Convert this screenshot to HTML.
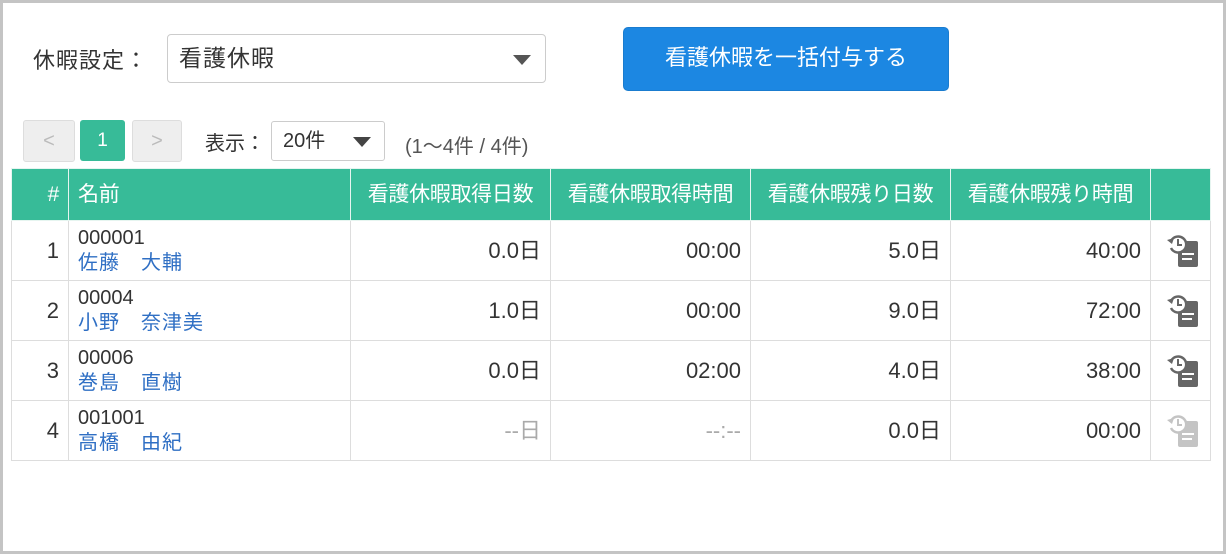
<html><head><style>
body{margin:0;width:1226px;height:554px;overflow:hidden;background:#fff;font-family:"Liberation Sans","Noto Sans CJK JP",sans-serif;color:#333}
.frame{position:absolute;left:0;top:0;width:1220px;height:548px;border:3px solid #c4c4c4}
.abs{position:absolute}
table{position:absolute;left:11px;top:168px;border-collapse:collapse;font-size:22px}
td,th{border:1px solid #ddd;padding:0 9px;vertical-align:middle;line-height:24px}
th{background:#37bb98;color:#fff;font-weight:normal;height:52px;border-color:#e6f5f0;text-align:center;font-size:21px;box-sizing:border-box;padding:0 6px;letter-spacing:-0.3px}
td{height:60px;box-sizing:border-box}
.r{text-align:right}
.n{font-size:20px;line-height:25px}
.n a{color:#2f6fc4;letter-spacing:1px}
.g{color:#aaa}
</style></head><body>
<div class="frame"></div>
<div class="abs" style="left:33px;top:43px;font-size:22px;letter-spacing:1px">休暇設定：</div>
<div class="abs" style="left:167px;top:34px;width:377px;height:47px;border:1px solid #ccc;border-radius:4px;font-size:23px;line-height:46px;text-indent:11px;letter-spacing:1px">看護休暇<span style="position:absolute;right:14px;top:20px;border-left:9px solid transparent;border-right:9px solid transparent;border-top:10px solid #555"></span></div>
<div class="abs" style="left:623px;top:27px;width:324px;height:62px;background:#1c87e2;border-radius:5px;border:1px solid #1a7ccf;color:#fff;font-size:22px;text-align:center;line-height:60px">看護休暇を一括付与する</div>
<div class="abs" style="left:23px;top:120px;width:50px;height:40px;background:#eee;border:1px solid #ddd;border-radius:3px;color:#bbb;text-align:center;line-height:40px;font-size:20px">&lt;</div>
<div class="abs" style="left:80px;top:120px;width:45px;height:41px;background:#37bb98;border-radius:3px;color:#fff;text-align:center;line-height:41px;font-size:19px">1</div>
<div class="abs" style="left:132px;top:120px;width:48px;height:40px;background:#eee;border:1px solid #ddd;border-radius:3px;color:#bbb;text-align:center;line-height:40px;font-size:20px">&gt;</div>
<div class="abs" style="left:205px;top:127px;font-size:20px">表示：</div>
<div class="abs" style="left:271px;top:121px;width:112px;height:38px;border:1px solid #ccc;border-radius:3px;font-size:20px;line-height:38px;text-indent:11px">20件<span style="position:absolute;right:13px;top:15px;border-left:9px solid transparent;border-right:9px solid transparent;border-top:10px solid #444"></span></div>
<div class="abs" style="left:405px;top:130px;font-size:20px;color:#555">(1〜4件 / 4件)</div>
<table>
<tr><th style="width:57px;text-align:right;padding-right:9px">#</th><th style="width:282px;text-align:left;padding-left:9px">名前</th><th style="width:200px">看護休暇取得日数</th><th style="width:200px">看護休暇取得時間</th><th style="width:200px">看護休暇残り日数</th><th style="width:200px">看護休暇残り時間</th><th style="width:60px"></th></tr>
<tr><td class="r">1</td><td class="n">000001<br><a>佐藤　大輔</a></td><td class="r">0.0日</td><td class="r">00:00</td><td class="r">5.0日</td><td class="r">40:00</td><td>ICON</td></tr>
<tr><td class="r">2</td><td class="n">00004<br><a>小野　奈津美</a></td><td class="r">1.0日</td><td class="r">00:00</td><td class="r">9.0日</td><td class="r">72:00</td><td>ICON</td></tr>
<tr><td class="r">3</td><td class="n">00006<br><a>巻島　直樹</a></td><td class="r">0.0日</td><td class="r">02:00</td><td class="r">4.0日</td><td class="r">38:00</td><td>ICON</td></tr>
<tr><td class="r">4</td><td class="n">001001<br><a>高橋　由紀</a></td><td class="r g">--日</td><td class="r g">--:--</td><td class="r">0.0日</td><td class="r">00:00</td><td>ICONL</td></tr>
</table>
<script>
function ic(c){return '<svg width="40" height="40" viewBox="0 0 40 40" style="display:block;margin:0 auto"><rect x="17" y="10" width="20" height="26" rx="2" fill="'+c+'"/><rect x="21" y="22" width="12" height="2" fill="#fff"/><rect x="21" y="27" width="10" height="2" fill="#fff"/><circle cx="17" cy="13" r="9" fill="#fff"/><path d="M10 10 A8 8 0 1 1 10 17" fill="none" stroke="'+c+'" stroke-width="2.5"/><path d="M6 9 L11 13 L13 7 Z" fill="'+c+'"/><path d="M17 8 V14 H21" fill="none" stroke="'+c+'" stroke-width="2"/></svg>'}
document.querySelectorAll('td').forEach(t=>{if(t.textContent=='ICON')t.innerHTML=ic('#666');if(t.textContent=='ICONL')t.innerHTML=ic('#c4c4c4');});
</script>
</body></html>
